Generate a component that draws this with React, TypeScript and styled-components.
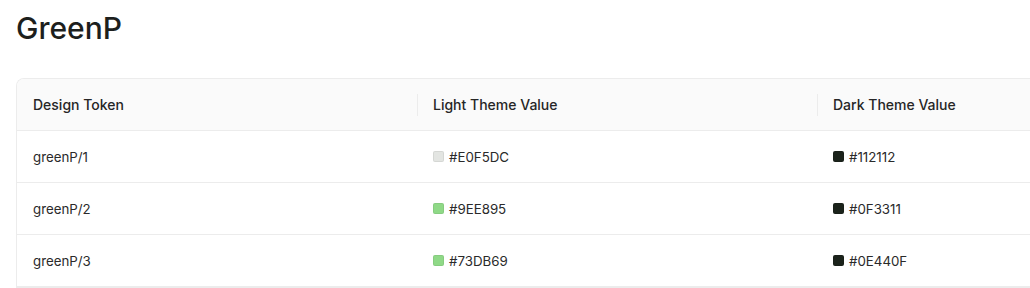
import styled, { createGlobalStyle } from "styled-components";

const GlobalStyle = createGlobalStyle`
  body {
    margin: 0;
    background: #ffffff;
    font-family: Inter, "Noto Sans", sans-serif;
    color: #1f1f1f;
    overflow: hidden;
  }
`;

const Page = styled.div`
  padding: 13px 0 0 16px;
`;

const Title = styled.h2`
  margin: 0 0 35px;
  font-size: 30px;
  font-weight: 500;
  line-height: 30px;
  color: #1d1f1d;
`;

const Table = styled.div`
  width: 1200px;
  border: 1px solid #ececec;
  border-right: none;
  border-radius: 8px 0 0 0;
  overflow: hidden;
`;

const Row = styled.div<{ head?: boolean }>`
  display: grid;
  grid-template-columns: 400px 400px 400px;
  height: 51px;
  background: ${(p) => (p.head ? "#fafafa" : "#ffffff")};
  border-bottom: 1px solid #ececec;
`;

const Cell = styled.div<{ head?: boolean; divider?: boolean }>`
  position: relative;
  display: flex;
  align-items: center;
  gap: 5px;
  padding: 0 16px;
  font-size: ${(p) => (p.head ? 14 : 13.3)}px;
  font-weight: ${(p) => (p.head ? 500 : 400)};
  color: ${(p) => (p.head ? "#262626" : "#2a2a2a")};
  &::before {
    content: "";
    display: ${(p) => (p.divider ? "block" : "none")};
    position: absolute;
    left: 0;
    top: 50%;
    height: 22px;
    width: 1px;
    transform: translateY(-50%);
    background: #ececec;
  }
`;

const Swatch = styled.span<{ color: string }>`
  width: 11px;
  height: 11px;
  border-radius: 2px;
  background: ${(p) => p.color};
  box-sizing: border-box;
  border: 1px solid rgba(0, 0, 0, 0.06);
  flex-shrink: 0;
`;

const tokens = [
  { name: "greenP/1", light: "#E0F5DC", lightSwatch: "#e3e5e2", dark: "#112112", darkSwatch: "#1b231b" },
  { name: "greenP/2", light: "#9EE895", lightSwatch: "#8fd987", dark: "#0F3311", darkSwatch: "#1b231b" },
  { name: "greenP/3", light: "#73DB69", lightSwatch: "#8fd987", dark: "#0E440F", darkSwatch: "#1b231b" },
];

export default function App() {
  return (
    <>
      <GlobalStyle />
      <Page>
        <Title>GreenP</Title>
        <Table>
          <Row head>
            <Cell head>Design Token</Cell>
            <Cell head divider>Light Theme Value</Cell>
            <Cell head divider>Dark Theme Value</Cell>
          </Row>
          {tokens.map((t) => (
            <Row key={t.name}>
              <Cell>{t.name}</Cell>
              <Cell>
                <Swatch color={t.lightSwatch} />
                {t.light}
              </Cell>
              <Cell>
                <Swatch color={t.darkSwatch} />
                {t.dark}
              </Cell>
            </Row>
          ))}
        </Table>
      </Page>
    </>
  );
}
